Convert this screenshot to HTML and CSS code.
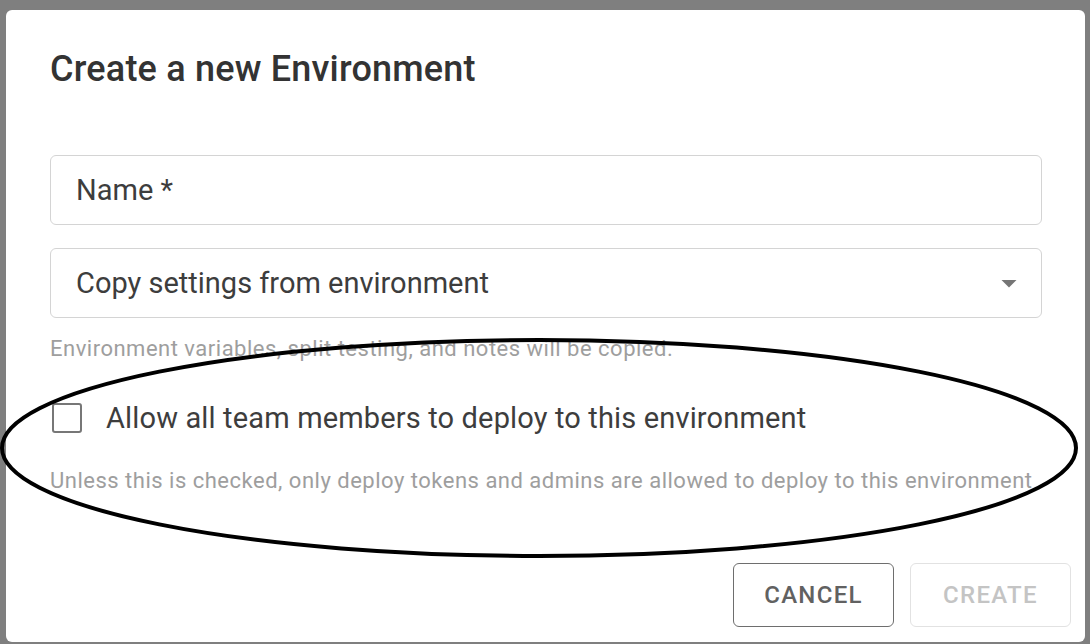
FILE: index.html
```html
<!DOCTYPE html>
<html>
<head>
<meta charset="utf-8">
<link rel="stylesheet" href="styles.css">
</head>
<body>
<div class="backdrop">
  <div class="dialog">
    <h2 class="title">Create a new Environment</h2>
    <div class="content">
      <div class="field">
        <span class="field-label">Name *</span>
      </div>
      <div class="field select">
        <span class="field-label">Copy settings from environment</span>
        <svg class="arrow" width="36" height="36" viewBox="0 0 24 24"><path d="M7 10l5 5 5-5z" fill="#757575"/></svg>
      </div>
      <p class="helper">Environment variables, split testing, and notes will be copied.</p>
      <label class="check-row">
        <span class="checkbox"></span>
        <span class="check-label">Allow all team members to deploy to this environment</span>
      </label>
      <p class="helper helper2">Unless this is checked, only deploy tokens and admins are allowed to deploy to this environment</p>
    </div>
    <div class="actions">
      <button class="btn cancel">CANCEL</button>
      <button class="btn create" disabled>CREATE</button>
    </div>
  </div>
  <svg class="annotation" width="1090" height="644" viewBox="0 0 1090 644">
    <ellipse cx="539" cy="448" rx="537" ry="108" fill="none" stroke="#000" stroke-width="4"/>
  </svg>
</div>
</body>
</html>
```

FILE: styles.css
```css
* { box-sizing: border-box; }
html, body { margin: 0; padding: 0; }
body {
  width: 1090px;
  height: 644px;
  overflow: hidden;
  background: #7f7f7f;
  font-family: Roboto, "Liberation Sans", sans-serif;
}
.backdrop {
  position: relative;
  width: 1090px;
  height: 644px;
  padding: 10px 5px 0 6px;
}
.dialog {
  background: #fff;
  height: 632px;
  border-radius: 6px;
  display: flex;
  flex-direction: column;
}
.title {
  margin: 0;
  padding: 32px 43px 0 44px;
  font-size: 36px;
  line-height: 54px;
  font-weight: 500;
  letter-spacing: 0.2px;
  color: #333;
}
.content {
  padding: 59px 43px 0 44px;
  display: flex;
  flex-direction: column;
}
.field {
  height: 70px;
  border: 1.5px solid #d4d4d4;
  border-radius: 6px;
  display: flex;
  align-items: center;
  padding: 0 14px 0 25px;
  margin-bottom: 23px;
}
.field-label {
  font-size: 29px;
  color: #3d3d3d;
  flex: 1;
}
.select { margin-bottom: 0; }
.helper {
  margin: 0;
  padding: 16px 0 0 0;
  font-size: 22px;
  line-height: 30px;
  color: #9e9e9e;
  letter-spacing: 0.5px;
}
.check-row {
  display: flex;
  align-items: center;
  margin-top: 34px;
  height: 40px;
}
.checkbox {
  width: 30px;
  height: 30px;
  border: 2.5px solid #777;
  border-radius: 3px;
  margin: 0 24px 0 2px;
  flex: none;
}
.check-label {
  font-size: 29px;
  letter-spacing: 0.15px;
  color: #3d3d3d;
}
.helper2 { padding-top: 28px; }
.actions {
  margin-top: auto;
  display: flex;
  justify-content: flex-end;
  gap: 16px;
  padding: 0 14px 15px 0;
}
.btn {
  width: 161px;
  height: 64px;
  background: #fff;
  border-radius: 6px;
  font-family: Roboto, "Liberation Sans", sans-serif;
  font-size: 24px;
  font-weight: 500;
  letter-spacing: 1.3px;
}
.cancel {
  border: 1.5px solid #6e6e6e;
  color: #616161;
}
.create {
  border: 1.5px solid #e2e2e2;
  color: #c4c4c4;
}
.annotation {
  position: absolute;
  left: 0;
  top: 0;
  pointer-events: none;
}
```
